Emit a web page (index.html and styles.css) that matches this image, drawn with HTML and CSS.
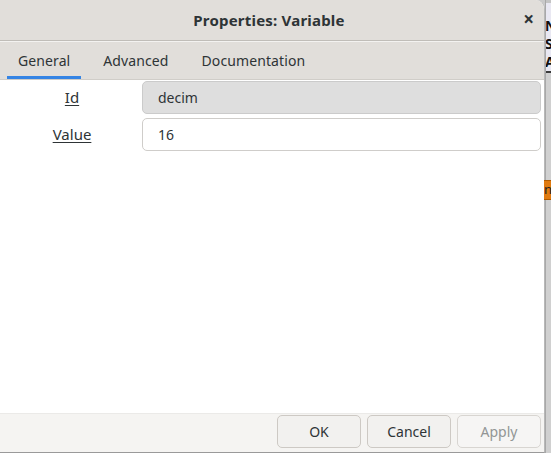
FILE: index.html
```html
<!DOCTYPE html>
<html>
<head>
<meta charset="utf-8">
<link rel="stylesheet" href="styles.css">
</head>
<body>
<div class="screen">
  <div class="dialog">
    <div class="titlebar">
      <div class="title">Properties: Variable</div>
      <div class="close">×</div>
    </div>
    <div class="tabs">
      <div class="tab active">General</div>
      <div class="tab">Advanced</div>
      <div class="tab">Documentation</div>
    </div>
    <div class="content">
      <div class="row">
        <div class="label"><u>Id</u></div>
        <div class="field readonly">decim</div>
      </div>
      <div class="row">
        <div class="label"><u>Value</u></div>
        <div class="field">16</div>
      </div>
    </div>
    <div class="buttons">
      <div class="btn">OK</div>
      <div class="btn">Cancel</div>
      <div class="btn disabled">Apply</div>
    </div>
  </div>
  <div class="behind">
    <div class="behind-top">
      <span>N</span><span>S</span><span>A</span>
    </div>
    <div class="behind-body">
      <div class="orange">n</div>
    </div>
  </div>
</div>
</body>
</html>
```
FILE: styles.css
```css
html, body { margin: 0; padding: 0; }
body {
  width: 551px; height: 453px; overflow: hidden;
  font-family: "Noto Sans", "Open Sans", sans-serif;
  font-size: 14px; color: #2e3436;
  background: #c9c9c9;
}
.screen { display: flex; height: 453px; }
.dialog {
  width: 544px; height: 452px;
  display: flex; flex-direction: column;
  background: #ffffff;
  border-right: 1px solid #b8b8b8;
  border-bottom: 1px solid #9a9a9a;
  border-top-right-radius: 9px;
  overflow: hidden;
  flex-shrink: 0;
}
.titlebar {
  height: 40px; flex-shrink: 0;
  background: #e1deda;
  border-bottom: 1px solid #c0bdb8;
  display: flex; align-items: center; justify-content: center;
  position: relative;
}
.title { font-weight: bold; font-size: 15px; color: #2e3436; padding-right: 6px; letter-spacing: 0.2px; }
.close {
  position: absolute; right: 10px; top: 9px;
  font-size: 19px; font-weight: bold; line-height: 20px; color: #2e3436;
}
.tabs {
  height: 37px; flex-shrink: 0;
  background: #e1deda;
  border-top: 1px solid #f3f2f0;
  border-bottom: 1px solid #d0cdc8;
  display: flex; padding-left: 7px;
}
.tab {
  padding: 0 11px; line-height: 37px; height: 34px;
  color: #2e3436; margin-right: 11px;
  border-bottom: 3px solid transparent;
  letter-spacing: 0.1px;
}
.tab.active { border-bottom-color: #3584e4; }
.content { flex: 1; display: flex; flex-direction: column; gap: 3px; padding: 0 3px 0 0; }
.row { display: flex; align-items: center; height: 34px; }
.label { width: 142px; text-align: center; color: #2e3436; font-size: 15px; padding-left: 2px; box-sizing: border-box; }
.label u { text-underline-offset: 2px; }
.field {
  flex: 1; height: 31px; line-height: 31px;
  border: 1px solid #cfcdca; border-radius: 5px;
  padding: 0 15px; background: #ffffff;
}
.field.readonly { background: #dedede; border-color: #cbcbcb; }
.buttons {
  height: 37px; flex-shrink: 0;
  background: #f5f4f2;
  border-top: 1px solid #ebeae8;
  display: flex; justify-content: flex-end; align-items: flex-start;
  gap: 6px; padding: 1px 3px 0 0;
}
.btn {
  width: 82px; height: 31px; line-height: 31px; text-align: center;
  border: 1px solid #cdc9c4; border-radius: 5px;
  background: #f2f1ef; color: #2e3436;
}
.btn.disabled { color: #929595; background: #f6f5f4; border-color: #d8d5d1; }
.behind { flex: 1; display: flex; flex-direction: column; background: #c4c4c4; border-left: 1px solid #a8a8a8; }
.behind-top {
  height: 70px; margin-top: 3px; background: #e9e8f2;
  border-bottom: 2px solid #3a3a3a;
  display: flex; flex-direction: column; padding-top: 15px; gap: 3px;
  font-weight: bold; font-size: 14px; line-height: 15px; color: #111;
  box-sizing: border-box; overflow: hidden;
}
.behind-top span { margin-left: -1px; }
.behind-body { flex: 1; padding-top: 107px; background: #d0d0d0; }
.orange {
  height: 18px; background: #e07a10; border-top: 1px solid #b05a00; border-bottom: 1px solid #b05a00;
  font-size: 13px; line-height: 16px; color: #222; margin-left: -2px; overflow: hidden;
}
```
